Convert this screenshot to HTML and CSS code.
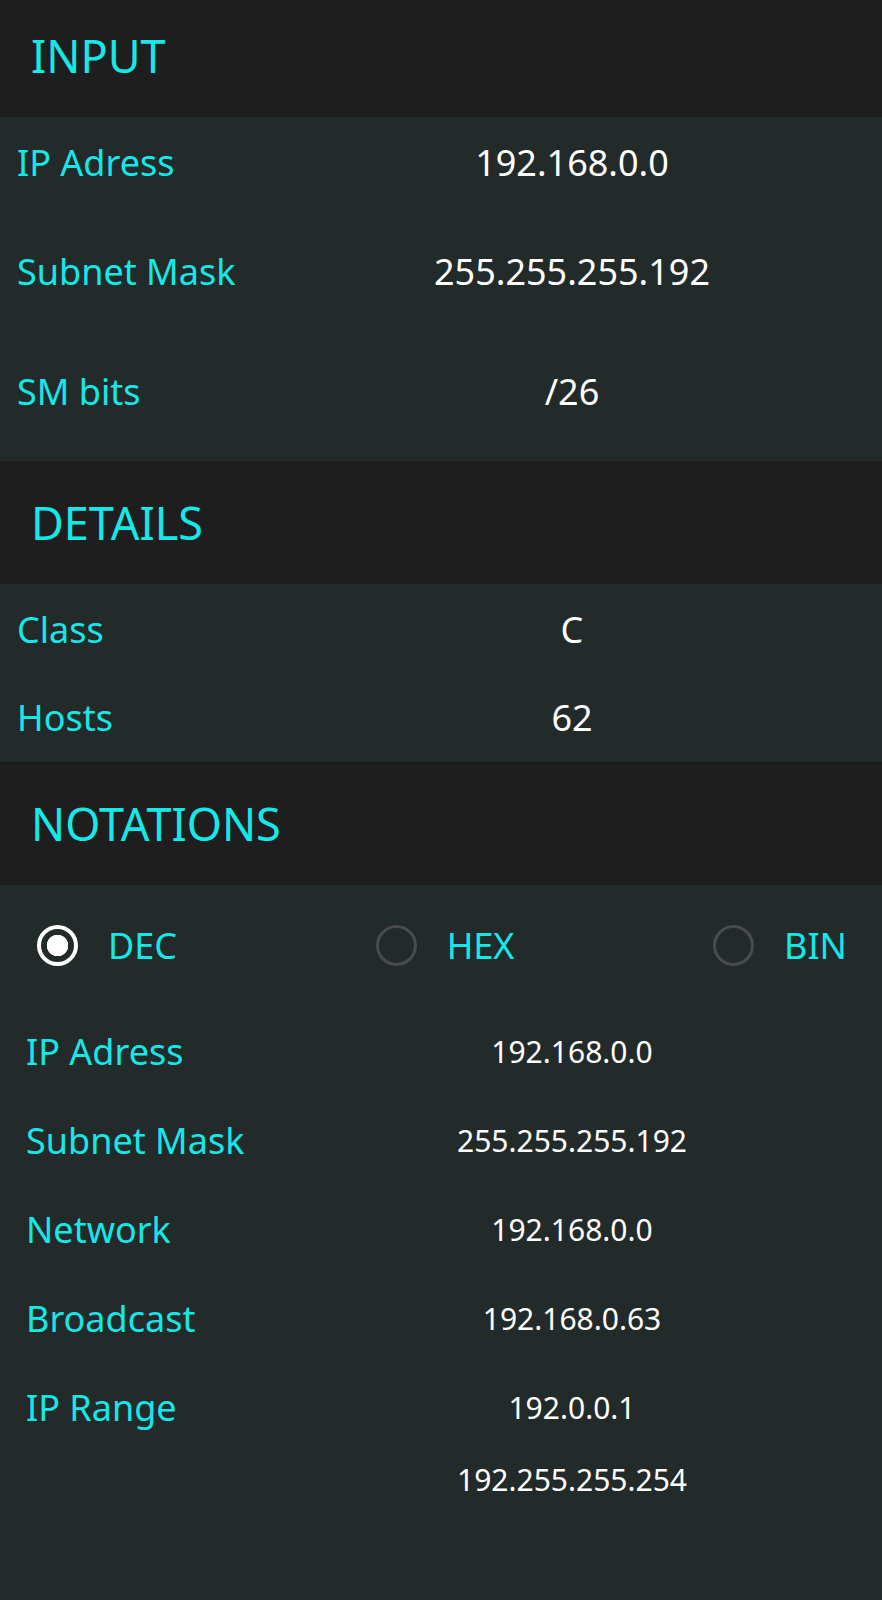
FILE: index.html
```html
<!DOCTYPE html>
<html lang="en">
<head>
<meta charset="utf-8">
<title>Subnet Calculator</title>
<link rel="stylesheet" href="styles.css">
</head>
<body>
<div class="app">
  <div class="section-head first"><span>INPUT</span></div>
  <div class="section-body input-body">
    <div class="row"><div class="label">IP Adress</div><div class="value">192.168.0.0</div></div>
    <div class="row"><div class="label">Subnet Mask</div><div class="value">255.255.255.192</div></div>
    <div class="row wide"><div class="label">SM bits</div><div class="value">/26</div></div>
  </div>

  <div class="section-head"><span>DETAILS</span></div>
  <div class="section-body details-body">
    <div class="row"><div class="label">Class</div><div class="value">C</div></div>
    <div class="row"><div class="label">Hosts</div><div class="value">62</div></div>
  </div>

  <div class="section-head"><span>NOTATIONS</span></div>
  <div class="section-body notations-body">
    <div class="radios">
      <div class="radio"><span class="dot checked"></span><span class="radio-text">DEC</span></div>
      <div class="radio"><span class="dot"></span><span class="radio-text">HEX</span></div>
      <div class="radio"><span class="dot"></span><span class="radio-text">BIN</span></div>
    </div>
    <div class="nrows">
      <div class="nrow"><div class="label">IP Adress</div><div class="nvalue">192.168.0.0</div></div>
      <div class="nrow"><div class="label">Subnet Mask</div><div class="nvalue">255.255.255.192</div></div>
      <div class="nrow"><div class="label">Network</div><div class="nvalue">192.168.0.0</div></div>
      <div class="nrow"><div class="label">Broadcast</div><div class="nvalue">192.168.0.63</div></div>
      <div class="nrow"><div class="label">IP Range</div>
        <div class="nstack"><div class="nvalue">192.0.0.1</div><div class="nvalue">192.255.255.254</div></div>
      </div>
    </div>
  </div>
</div>
</body>
</html>
```

FILE: styles.css
```css
* { box-sizing: border-box; }
html, body { margin: 0; padding: 0; }
body {
  background: #232a2a;
  font-family: "Noto Sans", "Open Sans", sans-serif;
  width: 882px;
  min-height: 1600px;
}
.app {
  display: flex;
  flex-direction: column;
  min-height: 1600px;
}
.section-head {
  background: #1e1e1e;
  height: 123px;
  display: flex;
  align-items: center;
  padding-left: 31px;
  color: #14e8e8;
  font-size: 45px;
  line-height: 56px;
}
.section-head.first {
  height: 117px;
  padding-bottom: 6px;
}
.section-body {
  background: #232a2a;
  display: flex;
  flex-direction: column;
}
.row {
  display: grid;
  grid-template-columns: 262px 1fr;
  align-items: center;
  height: 56px;
}
.label {
  color: #14e8e8;
  font-size: 36px;
  line-height: 56px;
  padding-left: 17px;
  white-space: nowrap;
}
.value {
  color: #ffffff;
  font-size: 36px;
  line-height: 56px;
  text-align: center;
}
.input-body {
  padding: 17.5px 0 41.5px;
  gap: 53px;
}
.input-body .row.wide { margin-top: 11px; }
.details-body {
  padding: 17.5px 0 16.5px;
  gap: 32px;
}
.notations-body {
  flex: 1;
  padding-top: 32.5px;
}
.radios {
  display: flex;
  justify-content: space-between;
  align-items: center;
  height: 56px;
  padding: 0 35px 0 37px;
}
.radio {
  display: flex;
  align-items: center;
  gap: 30px;
}
.dot {
  width: 41px;
  height: 41px;
  border-radius: 50%;
  border: 3.5px solid #4a4a4f;
  display: block;
}
.dot.checked {
  border: 4px solid #ffffff;
  background: radial-gradient(circle, #ffffff 0 10.5px, transparent 11px);
}
.radio-text {
  color: #14e8e8;
  font-size: 36px;
  line-height: 56px;
}
.radio-text.narrow { letter-spacing: -1px; }
.nrows {
  display: flex;
  flex-direction: column;
  gap: 33px;
  margin-top: 50px;
}
.nrow {
  display: grid;
  grid-template-columns: 262px 1fr;
  align-items: start;
}
.nrow .label { padding-left: 26px; }
.nstack {
  display: flex;
  flex-direction: column;
  gap: 16px;
}
.nvalue {
  color: #ffffff;
  font-size: 30px;
  line-height: 56px;
  text-align: center;
}
```
